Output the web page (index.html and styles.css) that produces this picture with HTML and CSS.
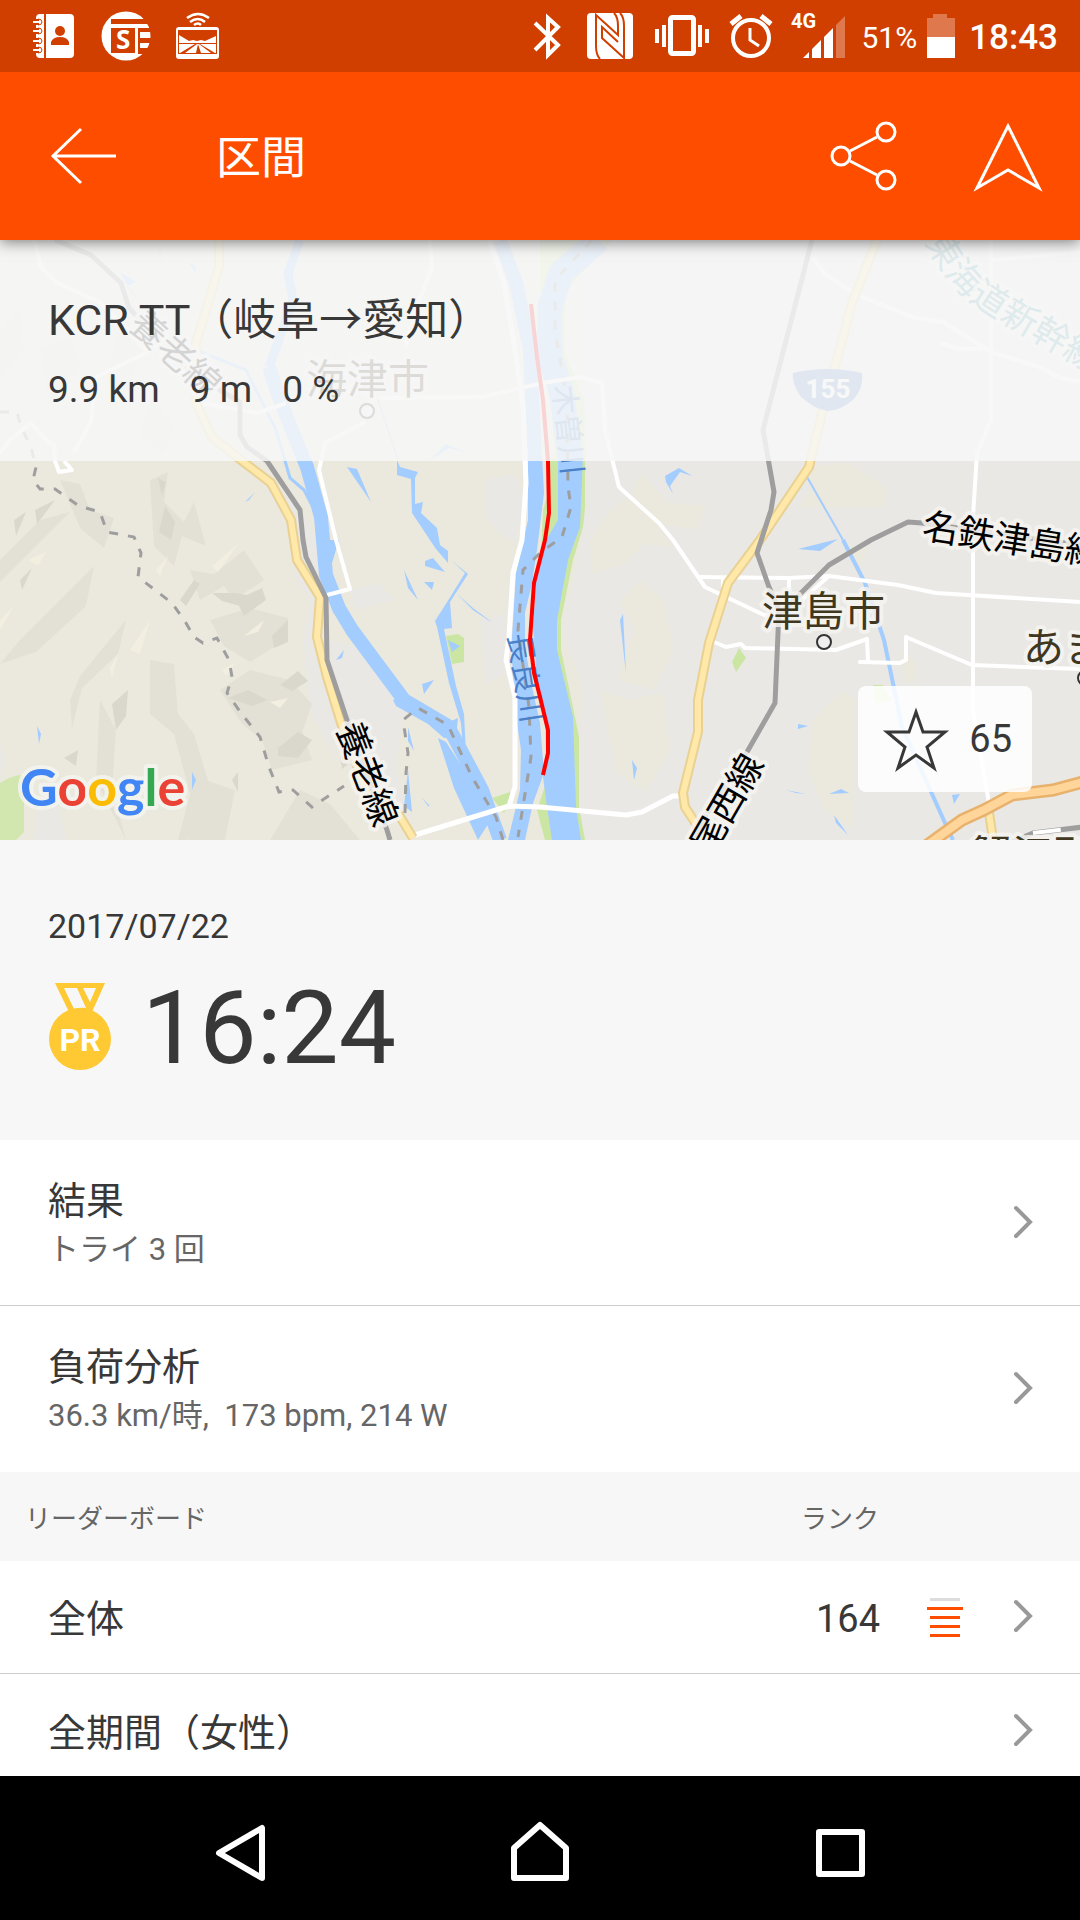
FILE: index.html
```html
<!DOCTYPE html>
<html lang="ja">
<head>
    <meta charset="UTF-8">
    <meta name="viewport" content="width=device-width, initial-scale=1.0">
    <title>区間</title>
    <link rel="stylesheet" href="styles.css">
</head>
<body>
    <div class="screen">
        <div class="status-bar">
            <div class="status-group notifications">
                <svg width="44" height="72" viewBox="32 0 44 72">
                    <path fill="#fff" d="M40 14h4v44h-4q-4 0-4-4V18q0-4 4-4zM46 14h24q4 0 4 4v36q0 4-4 4H46z"/>
                    <g fill="none" stroke="#d13f00" stroke-width="6"><path d="M33 22h6M33 31h6M33 41h6M33 50h6"/></g>
                    <g fill="none" stroke="#fff" stroke-width="2"><path d="M33 22h7M33 31h7M33 41h7M33 50h7"/></g>
                    <path fill="none" stroke="#d13f00" stroke-width="1" d="M38 19q4 0 4 3t-4 3M38 28q4 0 4 3t-4 3M38 38q4 0 4 3t-4 3M38 47q4 0 4 3t-4 3"/>
                    <circle cx="60" cy="31" r="5" fill="#d13f00"/>
                    <path fill="#d13f00" d="M51 45v-3q2-5 9-5t9 5v3z"/>
                </svg>
                <svg width="50" height="72" viewBox="102 0 50 72">
                    <circle cx="127" cy="36" r="24.500" fill="#fff"/>
                    <path fill="#d13f00" d="M112 19h40v5h-40zM112 28h24v25h-24zM139 28h14v4h-14zM139 38h14v5h-14zM139 48h14v6h-14zM139 28h2v25h-2z"/>
                    <text x="117" y="49" font-size="26" class="icon-text">S</text>
                </svg>
                <svg width="44" height="72" viewBox="176 0 44 72">
                    <path fill="none" stroke="#fff" stroke-width="2.500" d="M187 18q11-8 22 0M190 22q8-6 15 0M194 25q4-3 7 0"/>
                    <rect x="176" y="27" width="43" height="32" rx="3" fill="#fff"/>
                    <path fill="#d13f00" d="M178 30h39v24h-39z"/>
                    <path fill="#fff" d="M179 35l10 6 4-1 4 1 4-1 4 1 11-5v7h-37zM179 44h16l-15 9h-1zM200 44h16v9h-1zM197 44h2l12 9h-10l-3-9-2 9h-11z"/>
                </svg>
            </div>
            <div class="status-group">
                <svg width="36" height="72" viewBox="528 0 36 72">
                    <path fill="none" stroke="#fff" stroke-width="4" d="M534 23l23 22-10 10V18l10 9-23 23"/>
                </svg>
                <svg width="50" height="72" viewBox="584 0 50 72">
                    <rect x="586" y="13" width="46" height="46" rx="4" fill="#fff"/>
                    <g fill="none" stroke="#d13f00" stroke-width="2">
                        <path d="M599 59q-4-4-4-13V15l22 20v-9q0-9-4-13"/>
                        <path d="M619 13q4 4 4 13v32l-22-20V27l16 15"/>
                    </g>
                </svg>
                <svg width="54" height="72" viewBox="654 0 54 72">
                    <rect x="669.500" y="17.500" width="23" height="36" rx="2" fill="none" stroke="#fff" stroke-width="5"/>
                    <path fill="#fff" d="M654 29h4v14h-4zM661 25h4v22h-4zM697 25h4v22h-4zM704 29h4v14h-4z"/>
                </svg>
                <svg width="44" height="72" viewBox="728 0 44 72">
                    <g fill="none" stroke="#fff" stroke-width="4">
                        <circle cx="750" cy="38" r="18"/>
                        <path stroke-width="3" d="M749 28v12l9 6"/>
                        <path stroke-width="5" d="M730 24l10-8M770 24l-10-8"/>
                    </g>
                </svg>
            </div>
            <div class="status-group battery-group">
                <svg width="58" height="72" viewBox="792 0 58 72">
                    <text x="790" y="28" class="network">4G</text>
                    <path fill="#fff" d="M802 58l6-6v6zM811 58v-9l9-9v18zM823 58V37l9-9v30z"/>
                    <path fill="#fff" opacity=".3" d="M835 58V25l9-9v42z"/>
                </svg>
                <span class="percent">51%</span>
                <svg width="32" height="72" viewBox="926 0 32 72">
                    <path fill="#fff" opacity=".3" d="M926 18h6v-4h14v4h8v19h-28z"/>
                    <path fill="#fff" d="M926 37h28v21h-28z"/>
                </svg>
                <span class="clock">18:43</span>
            </div>
        </div>

        <header class="app-bar">
            <button class="icon-button" aria-label="戻る">
                <svg width="68" height="68" viewBox="50 122 68 68"><path d="M81 129L53 156l28 27M53 156h63"/></svg>
            </button>
            <h1 class="app-title">区間</h1>
            <button class="icon-button" aria-label="共有">
                <svg width="72" height="72" viewBox="828 120 72 72"><path d="M850 151l27-14M850 161l27 14"/><circle cx="886" cy="132" r="9"/><circle cx="841" cy="156" r="9"/><circle cx="886" cy="180" r="9"/></svg>
            </button>
            <button class="icon-button" aria-label="ナビ">
                <svg width="72" height="72" viewBox="972 120 72 72"><path d="M1008 126l31 62-31-18-31 18z"/></svg>
            </button>
        </header>

        <main class="content">
            <section class="map">
                <svg class="map-canvas" viewBox="0 240 1080 600" preserveAspectRatio="xMidYMid slice">
                    <rect x="0" y="240" width="1080" height="600" fill="#ebe9de"/>

                    <!-- built-up ground -->
                    <g fill="#e9e8e5">
                        <path d="M580 240H1080V840H580l-4-60 8-90-22-60 20-90z"/>
                        <path d="M265 490l22 30 10 60 14 20-8 40 8 70 24 50-6-80-16-60 16-34-14-50-26-50zM330 640l30 8 44 60-8 60 14 50-30 10-20-40-28-60z"/>
                        <path d="M485 480l30-6 10 30-10 40-28-24zM480 620l26-6v60l-20 10zM350 590l30-6 14 16-40 10zM0 745l6 14-6 20z"/>
                        <path d="M38 810l20-8 8 38H34z"/>
                    </g>
                    <g fill="#ebe9de">
                        <path d="M590 540l20-30 20-14 12-24 24 30 40 4-8 24-38-6 14 24-30-4-20 20-32 10zM798 468l50-6 40 26-4 20-86 0 14-22z"/>
                        <path d="M640 580l24 20 10 50-20 40-36-10 16-50-14-30zM600 690l30 10 34-8 6 60-24 40-30-20zM812 720l30-30 14 10-2 130-30-20-16-40z"/>
                        <path d="M900 650l16 10-2 24-10-4zM1000 780l30 10-30 10zM850 555l20-10-14 30z"/>
                    </g>

                    <!-- hill shading -->
                    <g fill="#e3e1d5">
                        <path d="M0 560l40-40 30-8-30 30-40 40zM60 480l20 4 10 26 24 8-10 30-24-20zM150 480l18-8-4 30 20 20 10-20 12 44-24-10-8 30-20-20zM190 570l24 4 30-24 20 30-30 20-10-14-24 14zM210 620l40-12 38 10-6 24-32 20-26-16z"/>
                        <path d="M20 640l50-50 24-24-8 40-50 46-36 12zM70 700l10-24 46-56-8 34-36 34-10 40zM150 660l24 4 4 50 16 20 18 60-24 46h-10l12-46-16-60-24-20zM100 700l16 30-4 60 14 50-30-60z"/>
                        <path d="M220 690l30-20 40 10 22 24-14 40-26 4-30-24zM262 740l40-10 10 30-40 10zM205 780l30 10-10 50h-36zM300 790l30 14 30 36h-90z"/>
                        <path d="M0 330l20-20 4 40-24 30zM40 350l30-14 10 30-30 40zM120 320l20 30-14 50-20-20zM150 400l24 24-10 30-24-20z"/>
                    </g>
                    <g fill="#dad8cc">
                        <path d="M158 478l8 4-4 14zM165 506l10 16-4 18-12-8zM35 510l20-10-18 24zM14 520l12-8-10 24zM212 593l24 0 20 4-12 10-22-6zM236 600l26-12 4 12-22 16zM272 636l16-16v22l-14 6z"/>
                        <path d="M112 704l16-14-2 26-10 14zM228 698l20-8 20 10-16 6zM278 748l20-16 14 8-14 18-20-2zM280 685l18-14 10 10-16 10zM20 580l12-12-10 22zM180 600l14-20 6 4-14 22zM64 758l14-8-2 16zM232 780l6-8v20zM340 755l12 6-10 8z"/>
                    </g>
                    <g fill="#f2efe0">
                        <path d="M28 560l18-8-8 14zM212 566l26-22-20 28zM244 636l20-16-6 12zM156 570l12-14-8 20zM0 620l14-14-14 24zM110 668l8-14-6 24zM222 670l14-8-10 14zM270 702l18-4-8 10zM130 650l20-30-10 34z"/>
                    </g>

                    <!-- parks -->
                    <g fill="#cbe6a3">
                        <path d="M446 636l12-2 6 4v24l-12 2zM492 798l18-6v8l-6 13zM732 662l7-14 7 10-10 14zM873 685l10 0 8 16-16 2z"/>
                        <path d="M550 458h35v50l-2 19-10 33-12 60v30l14 67 4 20v70l6 33h-40l-8-30 10-30-2-50 2-60-8-70 4-90 7-23z"/>
                        <path d="M0 783q16-10 24-7v56l-8 8H0z" opacity=".8"/>
                        <path d="M540 240h72l-46 50-2 60 20 50 2 61h-30l-16-180z"/>
                    </g>

                    <!-- rivers and ponds -->
                    <g fill="none" stroke="#a3ccff" stroke-linejoin="round">
                        <path stroke-width="9" d="M300 240l-12 33 5 27-24 67"/>
                        <path stroke-width="14" d="M269 367l10 30 14 36 14 34 14 50 5 58 14 36"/>
                        <path stroke-width="14" d="M340 610l12 20 52 70 44 26 34 64 18 50"/>
                        <path stroke-width="3" d="M196 350l50 20 30 60 14 48 14 12 14 27"/>
                        <path stroke-width="14" d="M500 240l16 43 14 67 5 111"/>
                        <path stroke-width="25" d="M599 240l-38 33-11 34v50l11 33 10 71"/>
                        <path stroke-width="2" d="M807 477l36 63"/>
                        <path stroke-width="4" d="M843 540l22 43 19 57 18 87 43 96 8 17"/>
                        <path stroke-width="1" d="M378 400l20 60"/>
                    </g>
                    <g fill="#a3ccff">
                        <!-- 長良川 and 木曽川 -->
                        <path d="M528 455v65l-12 53-4 64 1 60 4 26 4 27-1 40-12 50h17l8-37 11-30-4-50-8-36-7-40v-34l7-30 5-33 7-57-2-38z"/>
                        <path d="M558 455v65l-10 17-11 33-4 57 4 53 11 43v34l-5 20 4 30 5 33h29l-5-33-3-90-16-67v-30l11-60 12-33 3-72z"/>
                        <path d="M327 540h12l-10 33 8 28-12-10zM393 700l10-4 46 26 9-4-2 18-12 2-16-14-32-18z"/>
                    </g>
                    <g fill="#a3ccff">
                        <path d="M347 467l10 2 14 33zM397 460l3 7 18 5-3 6v26l8-2-2 11 16 15 3 17 8 6v12l-12-14-24-36-1-34-14-4zM425 561l8-3 12 14-20-6zM404 570l14 30-10-12zM424 582l10 0-2 8zM451 560l17 14-18 28 2 26-8 1 12 57 8 28 2 40 10 37-12-28-3-40-12-40-12-56-2-6 14-22 16-26zM457 594l16 14 16 12 2 2-18-12zM448 640l12 6-8 6zM422 684l12-4-10 14zM336 660l8-10-2 8zM245 502l10-10-6 8zM37 726l4 8-2 10zM192 772l4 8-4 10zM438 738l8 4 30 46 16 30-14 22-24-52z"/>
                        <path d="M408 727l6 24-6-10zM408 770l4 42-8-6zM421 797l8 10v-2z"/>
                        <path d="M665 476l14-8 13 8-12-4-10 14 3 8-7-12zM620 620l3-6 3 60zM629 730l3 30 5 8-3 12zM798 549l40-10-18 12zM798 724l10 2-10 3zM786 790l20 4-10-1zM829 794l12-5 8 4zM834 815l14 20-12-12zM952 795l8-1-6 10zM985 452l10-6z"/>
                        <path d="M120 272l16 10-8 4 18 24-16-20zM157 245l8 25-4-15zM189 262l6 4 1 8zM140 400l6 12zM430 460l16-16 24 10-20-6z"/>
                    </g>

                    <!-- city and river boundaries -->
                    <g class="boundary">
                        <path d="M0 412h17l4 15 10 20 5 20-3 13 7 9h15l24 17 21 6 7 20 27 5 7 16-3 24 17 13 17 13 14 20 8 14 9 6 14-5 12 22 3 17-5 16 14 20 19 24 9 30 10 25 14-2 19 17 15-10 17-11"/>
                        <path d="M405 813l1-40 2-20-5-33 15-12 30 17 24 52 24 40 7 23"/>
                        <path d="M592 240l-37 40v50l12 70 1 87 3 20-9 30-22 16-17 17-5 60 11 77 2 50-13 80"/>
                    </g>

                    <!-- minor roads -->
                    <g class="road-minor">
                        <path d="M34 240l7 27 16 16 43 19 48 50-31 15-21 10-5 45-17 30 M0 453l10-13 21-17 17 19 6 3 1 16 4 11 13-2-8-9"/>
                        <path d="M200 403l58 10 28-10 M430 240l2 27-14 36-13 44 M365 422l-40 21-6 27 17 70 14 49-23 6"/>
                        <path d="M379 398l103-1 61-14 37-6 22 6 3 47 14 57 40 36 14 17 32 47 59 28h15"/>
                        <path class="wide" d="M489 240l15 43 11 67 8 57 3 76-4 57-9 33-4 64-3 23 9 37v90l-6 19-94 29M509 806l31 1 86 8 16-3 31-16h8"/>
                        <path d="M812 257l14 18 31 20 58 23 28 4 48 30 48 15 21 11 20 3M991 240v180l-14 33-4 64v193l16 93M991 260l89-8M940 343l20 6h31"/>
                        <path d="M697 577l91 1 41-2 69 9 38 8 144 9M723 577v20M789 578v25M829 576l-27 24M714 642l12 5 15-3 4 4 91 2 31-11 1 23h-8l40 1 6-3v-23l66 28 108 4"/>
                    </g>

                    <!-- yellow and orange trunk roads -->
                    <g class="road-edge">
                        <path d="M219 240v27l-12 40-11 36v60l16 34 29 23 30 23 20 37 6 40 23 37-3 40 10 40 14 46 24 64 31 23 17 28"/>
                        <path d="M877 240l-25 63-16 60-14 50-13 54-49 73-32 43-19 60-11 57v32l-15 61 2 14 13 20 8 20M988 806l6 40"/>
                    </g>
                    <g class="road-fill">
                        <path d="M219 240v27l-12 40-11 36v60l16 34 29 23 30 23 20 37 6 40 23 37-3 40 10 40 14 46 24 64 31 23 17 28"/>
                        <path d="M877 240l-25 63-16 60-14 50-13 54-49 73-32 43-19 60-11 57v32l-15 61 2 14 13 20 8 20M988 806l6 40"/>
                    </g>
                    <path d="M926 846l36-26 22-10 28-15 41-5 30-8" fill="none" stroke="#e8b26c" stroke-width="13"/>
                    <path d="M926 846l36-26 22-10 28-15 41-5 30-8" fill="none" stroke="#ffd59a" stroke-width="8"/>

                    <!-- railways -->
                    <g class="rail">
                        <path d="M55 240l36 15 30 28 8 25 60 64 51 30v33l7 12 20 14 33 49 3 30 3 17 20 41 1 62 21 63 39 107 3 10"/>
                        <path d="M812 240l-49 190 11 62-3 18-14 43 12 34 10 23-4 93-28 49-42 65-10 25"/>
                        <path d="M1080 545l-158-22-14-1-37 18-42 25-50 50M1012 842l21-9 50-6"/>
                    </g>
                    <path d="M1033 833l50-6" fill="none" stroke="#fff" stroke-width="4" stroke-dasharray="28 30"/>

                    <!-- place names -->
                    <g class="rail-label">
                        <text transform="translate(127 327) rotate(42)">養老線</text>
                        <text transform="translate(336 728) rotate(69)">養老線</text>
                        <text transform="translate(711 857) rotate(-60)">尾西線</text>
                        <text transform="translate(921 538) rotate(9)">名鉄津島線</text>
                    </g>
                    <path id="shinkansen" d="M925 242q25 47 60 69t110 64" fill="none"/>
                    <text class="shinkansen-label"><textPath href="#shinkansen">東海道新幹線</textPath></text>
                    <g class="river-label">
                        <text transform="translate(508 635) rotate(81)">長良川</text>
                        <text transform="translate(553 386) rotate(84)">木曽川</text>
                    </g>
                    <g class="city-label">
                        <text x="306" y="394">海津市</text>
                        <text x="762" y="626">津島市</text>
                        <text x="1023" y="662">あま市</text>
                        <text x="971" y="870">蟹江町</text>
                    </g>
                    <g fill="#eee" stroke="#333" stroke-width="2">
                        <circle cx="367" cy="411" r="7"/>
                        <circle cx="824" cy="642" r="7"/>
                        <circle cx="1085" cy="678" r="7"/>
                    </g>
                    <path d="M793 373q34-8 69 0 2 14-8 26-14 12-26 12-14-2-27-14-10-14-8-24z" fill="#6088c8"/>
                    <text x="828" y="398" class="route-number">155</text>

                    <!-- ridden segment -->
                    <path class="segment-line" d="M531 304l6 53 6 43 5 61 1 52-4 27-11 43-4 57 4 33 6 24 8 33v23l-5 22"/>

                    <text x="20" y="806" class="google"><tspan fill="#4285f4">G</tspan><tspan fill="#ea4335">o</tspan><tspan fill="#fbbc05">o</tspan><tspan fill="#4285f4">g</tspan><tspan fill="#34a853">l</tspan><tspan fill="#ea4335">e</tspan></text>
                </svg>

                <div class="segment-info">
                    <h2 class="segment-name">KCR TT（岐阜→愛知）</h2>
                    <div class="segment-stats"><span>9.9 km</span><span>9 m</span><span>0 %</span></div>
                </div>

                <button class="star-button" aria-label="スター 65">
                    <svg width="68" height="66" viewBox="882 706 68 66"><path d="M916 712l7 20h22l-18 15 7 21-18-13-18 13 7-21-18-15h22z"/></svg>
                    <span>65</span>
                </button>
            </section>

            <section class="effort">
                <div class="effort-date">2017/07/22</div>
                <div class="effort-result">
                    <svg width="64" height="90" viewBox="48 985 64 90">
                        <path fill="#ffc933" fill-rule="evenodd" d="M55 985h50l-13 29H69zM64 990l10 21q7-2 12-1l-9-20zM83 990l7 14 6-14z"/>
                        <circle cx="80" cy="1041" r="31" fill="#ffc933"/>
                        <text x="80" y="1053" class="medal-text">PR</text>
                    </svg>
                    <span class="effort-time">16:24</span>
                </div>
            </section>

            <nav class="list">
                <a class="row" href="#results">
                    <div class="row-text">
                        <div class="row-title">結果</div>
                        <div class="row-sub">トライ 3 回</div>
                    </div>
                    <svg class="chevron" width="20" height="36" viewBox="0 0 20 36"><path d="M3 3l14 14L3 31"/></svg>
                </a>
                <a class="row" href="#analysis">
                    <div class="row-text">
                        <div class="row-title">負荷分析</div>
                        <div class="row-sub">36.3 km/時,&nbsp; 173 bpm, 214 W</div>
                    </div>
                    <svg class="chevron" width="20" height="36" viewBox="0 0 20 36"><path d="M3 3l14 14L3 31"/></svg>
                </a>
            </nav>

            <section>
                <div class="board-header">
                    <span>リーダーボード</span>
                    <span>ランク</span>
                </div>
                <div class="list">
                    <a class="row row-small" href="#overall">
                        <div class="row-text row-title">全体</div>
                        <span class="rank">164</span>
                        <span class="rank-bars"><i class="off"></i><i class="me"></i><i></i><i></i><i></i></span>
                        <svg class="chevron" width="20" height="36" viewBox="0 0 20 36"><path d="M3 3l14 14L3 31"/></svg>
                    </a>
                    <a class="row row-small" href="#women">
                        <div class="row-text row-title">全期間（女性）</div>
                        <svg class="chevron" width="20" height="36" viewBox="0 0 20 36"><path d="M3 3l14 14L3 31"/></svg>
                    </a>
                </div>
            </section>
        </main>

        <div class="nav-bar">
            <button class="nav-button" aria-label="戻る"><svg width="64" height="64" viewBox="208 1821 64 64"><path d="M219 1853l43-25v50z"/></svg></button>
            <button class="nav-button" aria-label="ホーム"><svg width="64" height="64" viewBox="508 1821 64 64"><path d="M540 1825l26 23v30h-52v-30z"/></svg></button>
            <button class="nav-button" aria-label="履歴"><svg width="64" height="64" viewBox="808 1821 64 64"><path d="M819 1832h43v42h-43z"/></svg></button>
        </div>
    </div>
</body>
</html>
```

FILE: styles.css
```css
* {
    margin: 0;
    padding: 0;
    box-sizing: border-box;
}

body {
    font-family: Roboto, "Noto Sans CJK JP", sans-serif;
    color: #383838;
    background: #fff;
}

button {
    font: inherit;
    color: inherit;
    background: none;
    border: none;
    cursor: pointer;
}

svg {
    display: block;
    flex: none;
}

.screen {
    height: 100vh;
    display: flex;
    flex-direction: column;
    overflow: hidden;
}

/* status bar */
.status-bar {
    height: 72px;
    flex: none;
    display: flex;
    align-items: center;
    gap: 20px;
    padding: 0 22px 0 32px;
    background: #d13f00;
    color: #fff;
    position: relative;
    z-index: 3;
}

.status-group {
    display: flex;
    align-items: center;
    gap: 20px;
}

.status-group svg {
    overflow: visible;
}

.notifications {
    flex: 1;
    gap: 25px;
}

.battery-group {
    gap: 10px;
}

.icon-text {
    fill: #fff;
    font-weight: 700;
    font-family: "Open Sans", sans-serif;
}

.network {
    fill: #fff;
    font-size: 20px;
    font-weight: 700;
}

.percent,
.clock {
    padding-top: 3px;
}

.percent {
    font-size: 30px;
}

.clock {
    font-size: 35px;
    font-weight: 500;
}

/* app bar */
.app-bar {
    height: 168px;
    flex: none;
    display: flex;
    align-items: center;
    padding: 0 36px 0 50px;
    background: #ff4d00;
    color: #fff;
    box-shadow: 0 2px 14px rgba(0, 0, 0, 0.5);
    position: relative;
    z-index: 2;
}

.icon-button svg {
    fill: none;
    stroke: #fff;
    stroke-width: 3;
}

.icon-button + .icon-button {
    margin-left: 72px;
}

.app-title {
    flex: 1;
    margin-left: 98px;
    padding-bottom: 4px;
    font-size: 45px;
    font-weight: 400;
}

.content {
    flex: 1;
    min-height: 0;
    overflow: hidden;
}

/* map */
.map {
    height: 600px;
    position: relative;
    overflow: hidden;
}

.map-canvas {
    width: 100%;
    height: 100%;
}

.boundary {
    fill: none;
    stroke: #9e9e9e;
    stroke-width: 3;
    stroke-dasharray: 9 10;
}

.road-minor {
    fill: none;
    stroke: #fff;
    stroke-width: 4;
    stroke-linejoin: round;
}

.road-minor .wide {
    stroke-width: 5;
}

.road-edge,
.road-fill {
    fill: none;
    stroke: #e8d193;
    stroke-width: 10;
    stroke-linejoin: round;
}

.road-fill {
    stroke: #ffe8a8;
    stroke-width: 6;
}

.rail {
    fill: none;
    stroke: #9e9e9e;
    stroke-width: 5;
    stroke-linejoin: round;
}

.segment-line {
    fill: none;
    stroke: #f00;
    stroke-width: 4;
    stroke-linejoin: round;
}

.rail-label,
.shinkansen-label,
.city-label,
.google {
    stroke: rgba(245, 244, 240, 0.85);
    stroke-width: 8px;
    stroke-linejoin: round;
    paint-order: stroke;
}

.rail-label,
.shinkansen-label {
    font-size: 36px;
    fill: #000;
}

.shinkansen-label {
    fill: #4a9fa8;
}

.river-label {
    font-size: 30px;
    fill: #4a80c8;
}

.city-label {
    font-size: 41px;
    fill: #40371f;
}

.route-number {
    font-size: 26px;
    font-weight: 700;
    fill: #fff;
    text-anchor: middle;
}

.google {
    font-family: Lato, sans-serif;
    font-size: 52px;
    font-weight: 700;
}

.segment-info {
    position: absolute;
    top: 0;
    left: 0;
    right: 0;
    padding: 48px 48px 34px;
    background: rgba(247, 247, 247, 0.86);
}

.segment-name {
    font-size: 43px;
    font-weight: 400;
    line-height: 64px;
}

.segment-stats {
    display: flex;
    gap: 30px;
    font-size: 37px;
    line-height: 75px;
}

.star-button {
    position: absolute;
    right: 48px;
    bottom: 48px;
    height: 106px;
    display: flex;
    align-items: center;
    gap: 19px;
    padding: 0 20px 0 24px;
    border-radius: 8px;
    background: rgba(255, 255, 255, 0.86);
    font-size: 38px;
}

.star-button svg {
    fill: none;
    stroke: #383838;
    stroke-width: 3;
}

/* effort */
.effort {
    height: 300px;
    padding: 62px 48px 0;
    background: #f7f7f7;
}

.effort-date {
    font-size: 34px;
    line-height: 48px;
}

.effort-result {
    display: flex;
    align-items: center;
    gap: 30px;
    margin-top: 18px;
}

.medal-text {
    font-size: 32px;
    font-weight: 700;
    fill: #fff;
    text-anchor: middle;
}

.effort-time {
    font-size: 102px;
    line-height: 120px;
}

/* lists */
.row {
    height: 166px;
    display: flex;
    align-items: center;
    padding: 0 47px 0 48px;
    background: #fff;
    color: inherit;
    text-decoration: none;
    border-bottom: 1px solid #ccc;
}

.row:last-child {
    border-bottom: none;
}

.row-small {
    height: 113px;
}

.row-text {
    flex: 1;
    padding-top: 4px;
}

.row-title {
    font-size: 38px;
    font-weight: 400;
    line-height: 50px;
}

.row-sub {
    font-size: 31px;
    line-height: 48px;
    color: #666;
}

.chevron {
    fill: none;
    stroke: #999;
    stroke-width: 4;
    stroke-linecap: round;
}

.board-header {
    height: 89px;
    display: flex;
    align-items: center;
    justify-content: space-between;
    padding: 0 201px 0 25px;
    background: #f7f7f7;
    color: #666;
    font-size: 26px;
}

.rank {
    padding-top: 4px;
    font-size: 38px;
}

.rank-bars {
    width: 36px;
    display: flex;
    flex-direction: column;
    align-items: center;
    gap: 6px;
    margin: 0 50px 0 47px;
}

.rank-bars i {
    width: 30px;
    height: 3px;
    background: #ff4d00;
}

.rank-bars .me {
    width: 36px;
}

.rank-bars .off {
    background: #ddd;
}

/* system navigation */
.nav-bar {
    height: 144px;
    flex: none;
    display: flex;
    justify-content: center;
    background: #000;
}

.nav-button {
    width: 300px;
    display: flex;
    align-items: center;
    justify-content: center;
    padding-top: 10px;
}

.nav-button svg {
    fill: none;
    stroke: #fff;
    stroke-width: 6;
    stroke-linejoin: round;
}
```
